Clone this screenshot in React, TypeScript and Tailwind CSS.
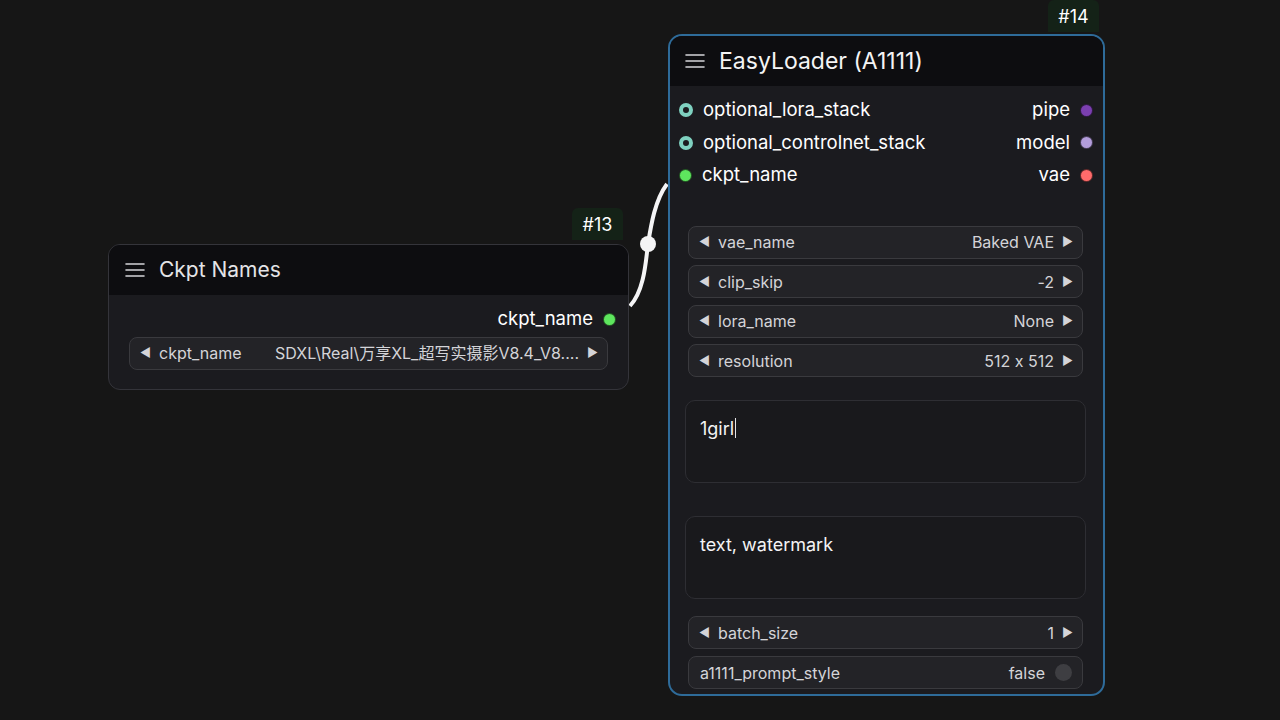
import React from 'react';

const font = { fontFamily: 'Inter, "Noto Sans CJK SC", sans-serif', fontFeatureSettings: '"calt" 0' };

function Hamburger() {
  return (
    <svg width="20" height="16" viewBox="0 0 20 16" className="shrink-0">
      <path d="M1 2h18M1 8h18M1 14h18" stroke="#d4d4d8" strokeWidth="1.6" strokeLinecap="round" />
    </svg>
  );
}

function ComboWidget({ label, value }: { label: string; value: string }) {
  return (
    <div className="flex h-[33px] items-center rounded-lg border border-[#3a3a3e] bg-[#232327] pl-[10px] pr-[9px] text-[16px] text-[#d4d4d8]">
      <span className="mr-[8px] text-[12px] text-[#d4d4d8]">◀</span>
      <span>{label}</span>
      <span className="ml-auto truncate pl-4">{value}</span>
      <span className="ml-[8px] text-[12px] text-[#d4d4d8]">▶</span>
    </div>
  );
}

function Slot({ name, color, hollow, side }: { name: string; color: string; hollow?: boolean; side: 'in' | 'out' }) {
  const dot = hollow ? (
    <span className="h-[14px] w-[14px] rounded-full border-[4.5px]" style={{ borderColor: color, backgroundColor: '#1b1b1f' }} />
  ) : (
    <span className="h-[13px] w-[13px] rounded-full border border-black/60" style={{ backgroundColor: color }} />
  );
  return side === 'in' ? (
    <div className="flex h-[32.5px] items-center gap-[10px]">
      {dot}
      <span>{name}</span>
    </div>
  ) : (
    <div className="flex h-[32.5px] items-center justify-end gap-[10px]">
      <span>{name}</span>
      {dot}
    </div>
  );
}

export default function App() {
  return (
    <div className="relative h-[720px] w-[1280px] overflow-hidden bg-[#161616] text-white" style={font}>
      {/* link wire */}
      <svg className="absolute left-0 top-0" width="1280" height="720">
        <path d="M630 306 C 645 290, 646 258, 648 244 C 651 225, 655 200, 667 184" stroke="#f4f4f5" strokeWidth="4" fill="none" />
        <circle cx="648" cy="244" r="8" fill="#f4f4f5" />
      </svg>

      {/* node 13 */}
      <div className="absolute left-[572px] top-[208px] flex h-[32px] w-[51px] items-center justify-center rounded-t-md bg-[#142217] text-[18px]">
        #13
      </div>
      <div className="absolute left-[108px] top-[244px] w-[521px] overflow-hidden rounded-[12px] border border-[#34343a] bg-[#1b1b1f]">
        <div className="flex h-[50px] items-center gap-[14px] bg-[#0d0d10] pl-4 text-[21px] text-[#e4e4e7]">
          <Hamburger />
          <span>Ckpt Names</span>
        </div>
        <div className="px-5 pb-[19px] pt-[8px] text-[18.5px]">
          <div className="-mr-[8px]">
            <Slot name="ckpt_name" color="#5ee65e" side="out" />
          </div>
          <div className="mt-[1px]">
            <ComboWidget label="ckpt_name" value="SDXL\Real\万享XL_超写实摄影V8.4_V8...." />
          </div>
        </div>
      </div>

      {/* node 14 */}
      <div className="absolute left-[1048px] top-0 flex h-[32px] w-[51px] items-center justify-center rounded-t-md bg-[#142217] text-[18px]">
        #14
      </div>
      <div className="absolute left-[668px] top-[34px] h-[662px] w-[437px] overflow-hidden rounded-[14px] border-2 border-[#2e6b99] bg-[#1b1b1f]">
        <div className="flex h-[50px] items-center gap-[14px] bg-[#0d0d10] pl-[15px] text-[23px] text-[#f4f4f5]">
          <Hamburger />
          <span>EasyLoader (A1111)</span>
        </div>
        <div className="grid grid-cols-[1fr_auto] pl-[9px] pr-[10px] pt-[8px] text-[18.5px]">
          <div>
            <Slot name="optional_lora_stack" color="#7fd1c0" hollow side="in" />
            <Slot name="optional_controlnet_stack" color="#7fd1c0" hollow side="in" />
            <Slot name="ckpt_name" color="#5ee65e" side="in" />
          </div>
          <div>
            <Slot name="pipe" color="#7b3fb0" side="out" />
            <Slot name="model" color="#b39ddb" side="out" />
            <Slot name="vae" color="#ff6b6b" side="out" />
          </div>
        </div>
        <div className="flex flex-col gap-[6.5px] pl-[18px] pr-[20px] pt-[34px]">
          <ComboWidget label="vae_name" value="Baked VAE" />
          <ComboWidget label="clip_skip" value="-2" />
          <ComboWidget label="lora_name" value="None" />
          <ComboWidget label="resolution" value="512 x 512" />
        </div>
        <div className="flex flex-col gap-[33px] pl-[15px] pr-[17px] pt-[23px]">
          <div className="h-[83px] rounded-[10px] border border-[#2e2e33] bg-[#19191c] px-[14px] pt-[14px] text-[18px] text-[#f4f4f5]">
            1girl<span className="ml-[1px] inline-block h-[20px] w-[1px] translate-y-[3px] bg-[#e4e4e7]" />
          </div>
          <div className="h-[83px] rounded-[10px] border border-[#2e2e33] bg-[#19191c] px-[14px] pt-[14px] text-[18px] text-[#f4f4f5]">
            text, watermark
          </div>
        </div>
        <div className="flex flex-col gap-[7px] pl-[18px] pr-[20px] pt-[17px]">
          <ComboWidget label="batch_size" value="1" />
          <div className="flex h-[33px] items-center rounded-lg border border-[#3a3a3e] bg-[#232327] pl-[11px] pr-[10px] text-[16px] text-[#d4d4d8]">
            <span>a1111_prompt_style</span>
            <span className="ml-auto">false</span>
            <span className="ml-[10px] h-[17px] w-[17px] rounded-full bg-[#3e3e42]" />
          </div>
        </div>
      </div>
    </div>
  );
}
